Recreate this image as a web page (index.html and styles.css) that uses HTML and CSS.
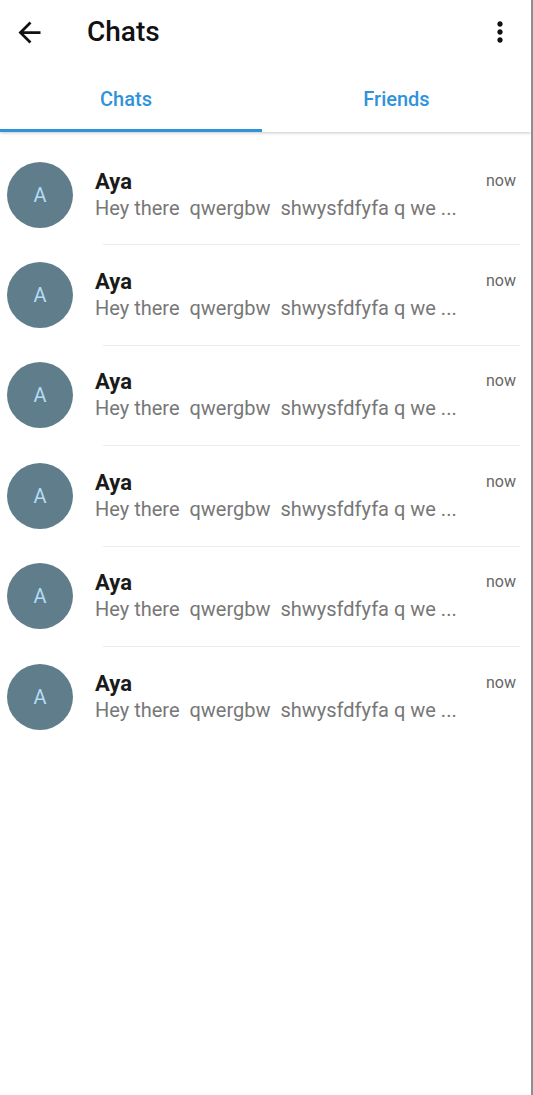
FILE: index.html
```html
<!DOCTYPE html>
<html>
<head>
<meta charset="utf-8">
<link rel="stylesheet" href="styles.css">
</head>
<body>
<div class="screen">
  <header class="appbar">
    <div class="toolbar">
      <svg class="icon back" viewBox="0 0 24 24" width="33" height="33"><path d="M20 11H7.83l5.59-5.59L12 4l-8 8 8 8 1.41-1.41L7.83 13H20v-2z"/></svg>
      <h1 class="title">Chats</h1>
      <svg class="icon more" viewBox="0 0 24 24" width="32" height="32"><path d="M12 8c1.1 0 2-.9 2-2s-.9-2-2-2-2 .9-2 2 .9 2 2 2zm0 2c-1.1 0-2 .9-2 2s.9 2 2 2 2-.9 2-2-.9-2-2-2zm0 6c-1.1 0-2 .9-2 2s.9 2 2 2 2-.9 2-2-.9-2-2-2z"/></svg>
    </div>
    <nav class="tabs">
      <div class="tab active">Chats</div>
      <div class="tab">Friends</div>
    </nav>
  </header>
  <main class="list">
    <div class="row"><div class="avatar">A</div><div class="body"><div class="top"><span class="name">Aya</span><span class="time">now</span></div><div class="msg">Hey there&nbsp; qwergbw&nbsp; shwysfdfyfa q we ...</div></div></div>
    <div class="divider"></div>
    <div class="row"><div class="avatar">A</div><div class="body"><div class="top"><span class="name">Aya</span><span class="time">now</span></div><div class="msg">Hey there&nbsp; qwergbw&nbsp; shwysfdfyfa q we ...</div></div></div>
    <div class="divider"></div>
    <div class="row"><div class="avatar">A</div><div class="body"><div class="top"><span class="name">Aya</span><span class="time">now</span></div><div class="msg">Hey there&nbsp; qwergbw&nbsp; shwysfdfyfa q we ...</div></div></div>
    <div class="divider"></div>
    <div class="row"><div class="avatar">A</div><div class="body"><div class="top"><span class="name">Aya</span><span class="time">now</span></div><div class="msg">Hey there&nbsp; qwergbw&nbsp; shwysfdfyfa q we ...</div></div></div>
    <div class="divider"></div>
    <div class="row"><div class="avatar">A</div><div class="body"><div class="top"><span class="name">Aya</span><span class="time">now</span></div><div class="msg">Hey there&nbsp; qwergbw&nbsp; shwysfdfyfa q we ...</div></div></div>
    <div class="divider"></div>
    <div class="row"><div class="avatar">A</div><div class="body"><div class="top"><span class="name">Aya</span><span class="time">now</span></div><div class="msg">Hey there&nbsp; qwergbw&nbsp; shwysfdfyfa q we ...</div></div></div>
  </main>
</div>
</body>
</html>
```
FILE: styles.css
```css
html, body {
  margin: 0;
  padding: 0;
  background: #ffffff;
}
body {
  font-family: Roboto, "Noto Sans", "Liberation Sans", sans-serif;
}
.screen {
  width: 531px;
  height: 1095px;
  border-right: 2px solid #8e8e8e;
  background: #ffffff;
  overflow: hidden;
}
.appbar {
  background: #ffffff;
  box-shadow: 0 1px 3px rgba(0, 0, 0, 0.22);
  position: relative;
  z-index: 1;
}
.toolbar {
  height: 64px;
  display: flex;
  align-items: center;
}
.icon {
  fill: #111111;
  flex: none;
}
.back {
  margin-left: 13px;
}
.title {
  margin: 0 0 0 41px;
  font-size: 28px;
  font-weight: 500;
  color: #111111;
  flex: 1;
  line-height: 32px;
}
.more {
  margin-right: 15px;
}
.tabs {
  display: grid;
  grid-template-columns: 262px 1fr;
  height: 68px;
}
.tab {
  display: flex;
  align-items: center;
  justify-content: center;
  font-size: 20px;
  font-weight: 500;
  color: #2f93da;
  padding-top: 2px;
  box-sizing: border-box;
}
.tab.active {
  box-shadow: inset 0 -3px 0 #2f93da;
  padding-right: 10px;
}
.list {
  padding-top: 13px;
}
.row {
  height: 99.4px;
  display: flex;
  align-items: center;
}
.avatar {
  width: 66px;
  height: 66px;
  border-radius: 50%;
  background: #607d8b;
  color: #b3dcf5;
  font-size: 20px;
  display: flex;
  align-items: center;
  justify-content: center;
  margin-left: 7px;
  flex: none;
}
.body {
  flex: 1;
  margin-left: 22px;
  margin-right: 15px;
  min-width: 0;
}
.top {
  display: flex;
  justify-content: space-between;
  align-items: flex-start;
}
.name {
  font-size: 22px;
  font-weight: 700;
  color: #1a1a1a;
  line-height: 26px;
}
.time {
  font-size: 16px;
  color: #666666;
  line-height: 20px;
  margin-top: 2px;
}
.msg {
  font-size: 20px;
  color: #777777;
  line-height: 26px;
  white-space: nowrap;
}
.divider {
  height: 1px;
  background: #ececec;
  margin: 0 11px 0 103px;
}
```
